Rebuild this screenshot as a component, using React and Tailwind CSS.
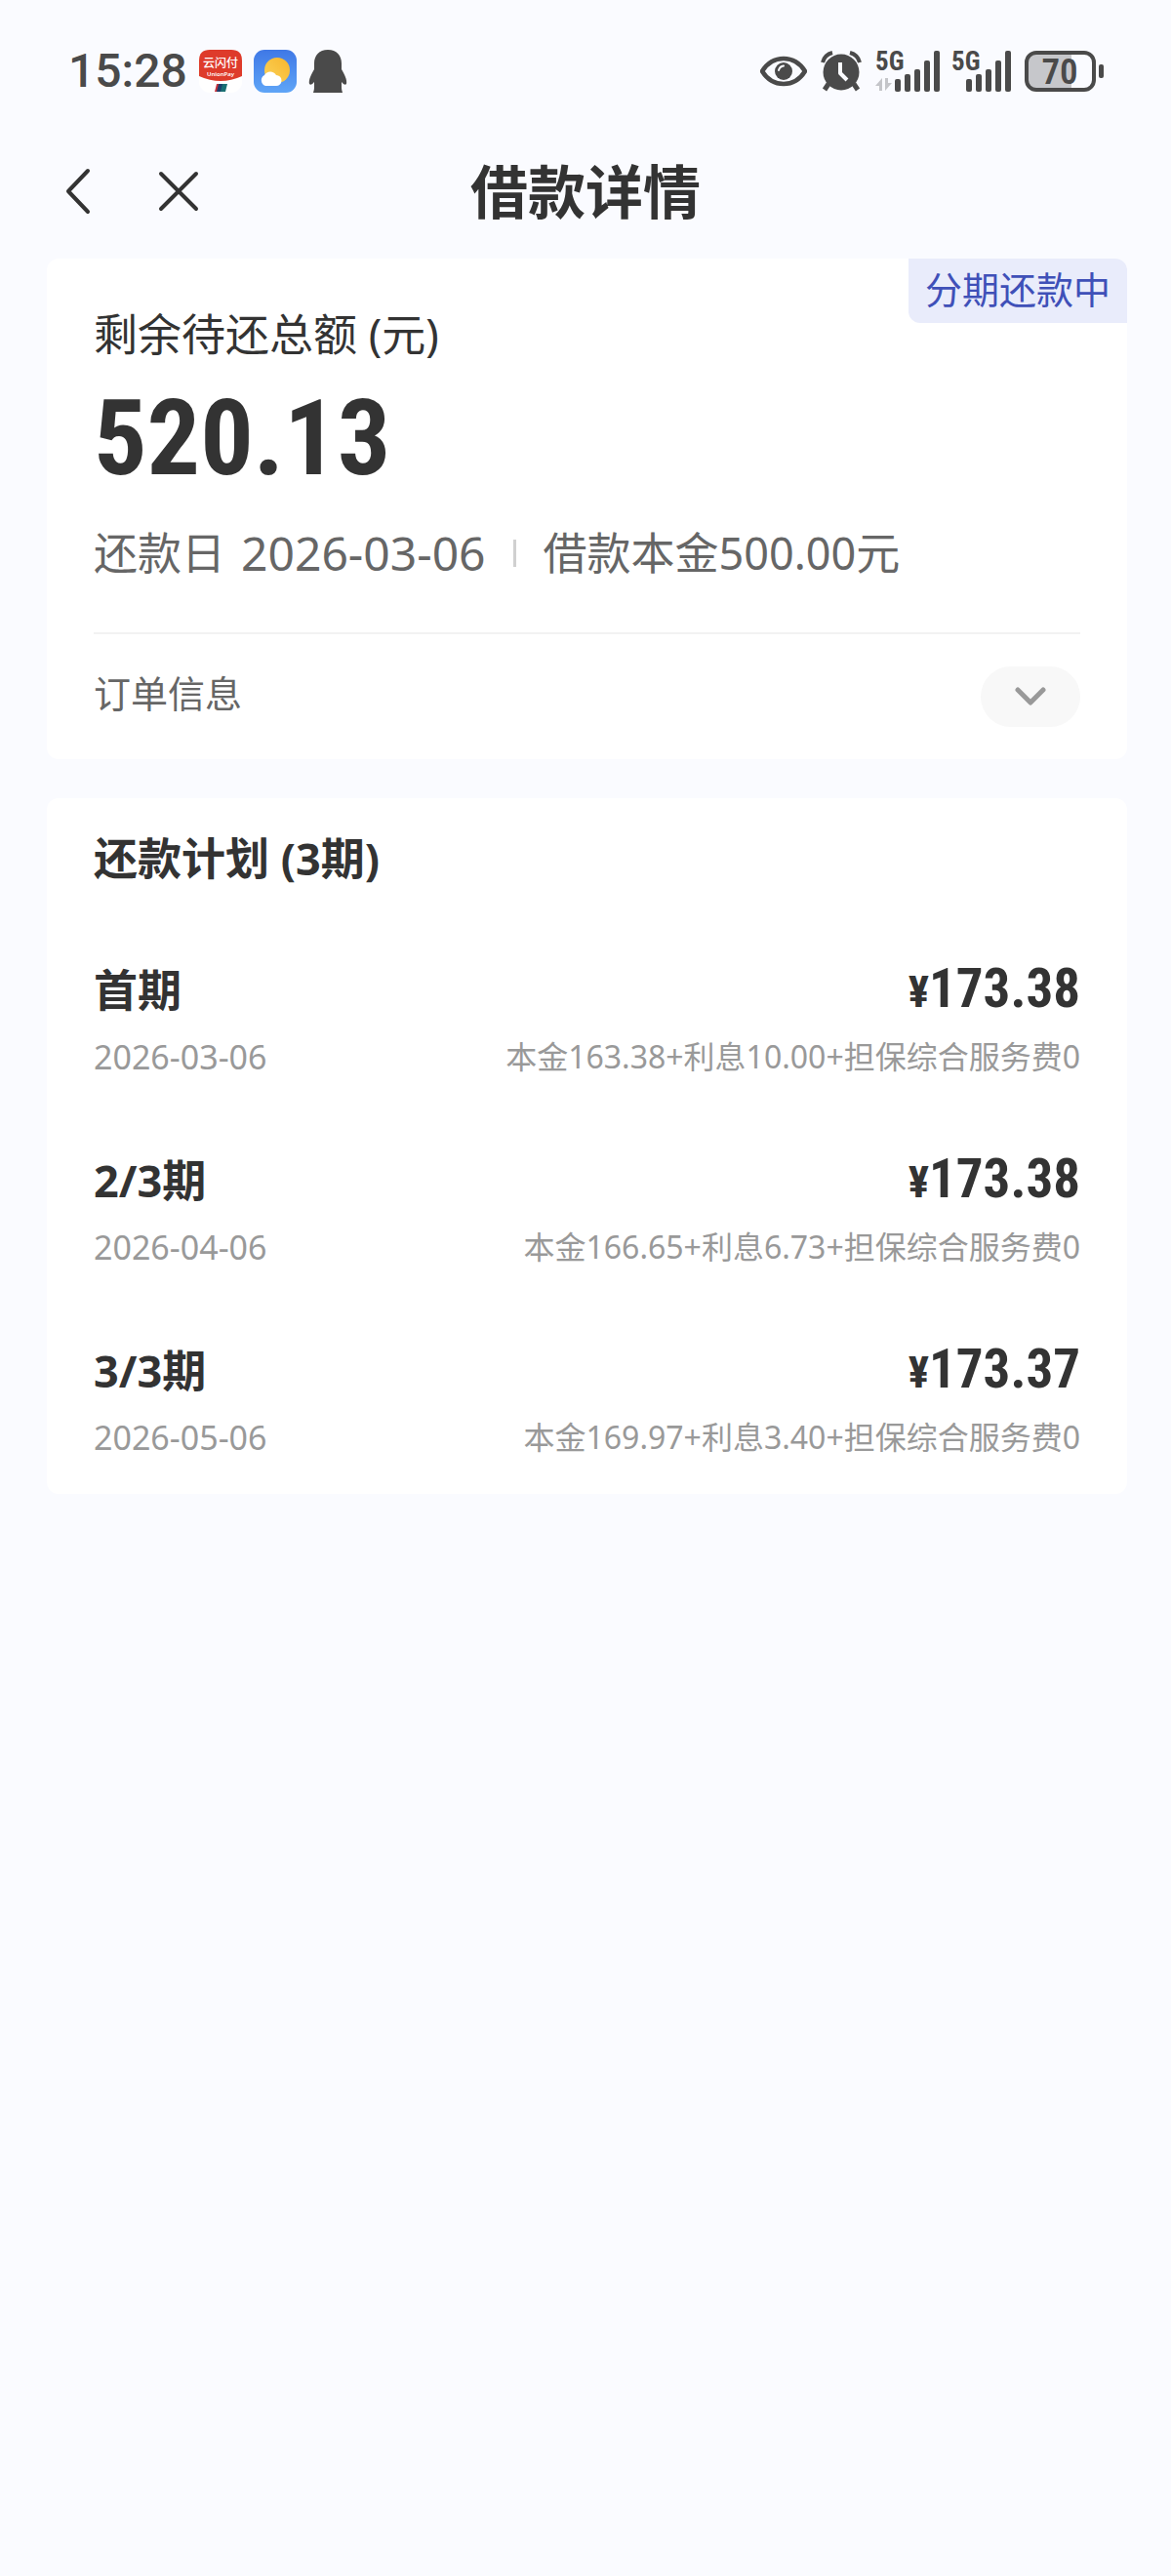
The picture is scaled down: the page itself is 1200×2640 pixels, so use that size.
import { useState } from "react";

const DARK = "#4a4a4a";

const plan = [
  { name: "首期", date: "2026-03-06", amount: "173.38", detail: "本金163.38+利息10.00+担保综合服务费0" },
  { name: "2/3期", date: "2026-04-06", amount: "173.38", detail: "本金166.65+利息6.73+担保综合服务费0" },
  { name: "3/3期", date: "2026-05-06", amount: "173.37", detail: "本金169.97+利息3.40+担保综合服务费0" },
];

function UnionPayIcon() {
  return (
    <svg width="44" height="44" viewBox="0 0 44 44" aria-label="云闪付">
      <rect width="44" height="44" rx="11" fill="#fff" />
      <path d="M0 11Q0 0 11 0H33Q44 0 44 11V27Q33 32 22 32Q11 32 0 27Z" fill="#de3b2b" />
      <text x="22" y="18" fontSize="12" fontWeight="500" fill="#fff" textAnchor="middle">云闪付</text>
      <text x="22" y="27" fontSize="6" fontWeight="600" fill="#fff" textAnchor="middle">UnionPay</text>
      <path d="M18 35H22L20 43H16Z" fill="#c8323c" />
      <path d="M20 35H25L23 43H18Z" fill="#1d3f6c" />
      <path d="M24 35H29L27 43H22Z" fill="#1a6f73" />
    </svg>
  );
}

function WeatherIcon() {
  return (
    <svg width="44" height="44" viewBox="0 0 44 44" aria-label="天气">
      <defs>
        <linearGradient id="sky" x1="0" y1="0" x2="0" y2="1">
          <stop offset="0" stopColor="#3f78e6" />
          <stop offset="1" stopColor="#5fa5f7" />
        </linearGradient>
        <linearGradient id="sun" x1="1" y1="0" x2="0" y2="1">
          <stop offset="0" stopColor="#f7b52c" />
          <stop offset="1" stopColor="#fbd35a" />
        </linearGradient>
      </defs>
      <rect width="44" height="44" rx="11" fill="url(#sky)" />
      <circle cx="24" cy="21" r="13" fill="url(#sun)" />
      <path d="M12 37a6 6 0 0 1-1-11a7 7 0 0 1 12 0a5.500 5.500 0 0 1 0 11z" fill="#fff" />
    </svg>
  );
}

function PenguinIcon() {
  return (
    <svg width="40" height="44" viewBox="0 0 40 44" fill={DARK} aria-label="QQ">
      <path d="M20 0C29 0 34 6 34 14V20C37 25 40 31 39 35Q37 37 34 33V39Q34 41 35 44H5Q6 41 6 39V33Q3 37 1 35C0 31 3 25 6 20V14C6 6 11 0 20 0Z" />
    </svg>
  );
}

function EyeIcon() {
  return (
    <svg width="48" height="32" viewBox="0 0 48 32" fill="none">
      <path d="M2 16C7 8 15 3 24 3S41 8 46 16C41 24 33 29 24 29S7 24 2 16Z" stroke={DARK} strokeWidth="4.500" strokeLinejoin="round" />
      <circle cx="24" cy="16" r="9" fill={DARK} />
      <path d="M19 15Q20 11 24 10.500" stroke="#fafbff" strokeWidth="2" strokeLinecap="round" />
    </svg>
  );
}

function AlarmIcon() {
  return (
    <svg width="42" height="42" viewBox="0 0 42 42" fill="none" stroke={DARK}>
      <circle cx="21" cy="22" r="18.500" fill={DARK} stroke="none" />
      <path d="M2 12Q4 4 12 2M40 12Q38 4 30 2" strokeWidth="4" />
      <path d="M8 34L4 40M34 34L38 40" strokeWidth="5" />
      <path d="M20 12V23L27 30" stroke="#fafbff" strokeWidth="4" strokeLinejoin="round" />
    </svg>
  );
}

function SignalIcon({ arrows }) {
  // the bars sit closer to the label when there are no data arrows
  const start = arrows ? 20 : 15;
  const tops = [29, 24, 19, 10, 0];

  return (
    <svg width={start + 46} height="58" viewBox={`0 -8 ${start + 46} 58`} fill={DARK} aria-label="5G">
      <text x="0" y="20" fontSize="27" fontWeight="700" className="font-['Roboto_Condensed',sans-serif]">5G</text>
      {arrows && <path d="M7 28V41H4V36H0ZM10 41V28H13V33H17Z" fill="#c4c5c9" />}
      {tops.map((top, i) => (
        <rect key={top} x={start + i * 10} y={top} width="6" height={42 - top} rx="2" />
      ))}
    </svg>
  );
}

function BatteryIcon() {
  return (
    <svg width="82" height="42" viewBox="0 0 82 42" aria-label="70%">
      <path d="M12 3H48V39H12Q3 39 3 30V12Q3 3 12 3Z" fill="#c6c7cb" />
      <rect x="2" y="2" width="69" height="38" rx="10" fill="none" stroke={DARK} strokeWidth="4" />
      <rect x="76" y="14" width="5" height="14" rx="2" fill={DARK} />
      <text x="36" y="34" fontSize="37" fontWeight="600" fill={DARK} textAnchor="middle" className="font-['Roboto_Condensed',sans-serif]">70</text>
    </svg>
  );
}

function StatusBar() {
  return (
    <div className="flex h-[146px] items-center justify-between pr-[68px] pl-[70px]">
      <div className="flex items-center gap-3">
        <span className="font-[Roboto,sans-serif] text-[48px] leading-none font-medium text-[#4a4a4a]">15:28</span>
        <UnionPayIcon />
        <WeatherIcon />
        <PenguinIcon />
      </div>
      <div className="flex items-center gap-[14px]">
        <EyeIcon />
        <AlarmIcon />
        <div className="flex gap-3">
          <SignalIcon arrows />
          <SignalIcon />
        </div>
        <BatteryIcon />
      </div>
    </div>
  );
}

function Header() {
  return (
    <header className="grid h-[100px] grid-cols-[1fr_auto_1fr] items-center">
      <div className="flex items-center gap-[68px] pl-[66px]">
        <button type="button" aria-label="返回">
          <svg width="28" height="48" viewBox="0 0 28 48" fill="none" stroke="#333" strokeWidth="4" strokeLinecap="round" strokeLinejoin="round">
            <path d="M24 3L4 24L24 45" />
          </svg>
        </button>
        <button type="button" aria-label="关闭">
          <svg width="42" height="42" viewBox="0 0 42 42" fill="none" stroke="#333" strokeWidth="4" strokeLinecap="round">
            <path d="M3 3L39 39M39 3L3 39" />
          </svg>
        </button>
      </div>
      <h1 className="text-[59px] leading-none font-bold">借款详情</h1>
    </header>
  );
}

function SummaryCard() {
  const [open, setOpen] = useState(false);

  return (
    <section className="relative rounded-xl bg-white px-12 pt-12">
      <span className="absolute top-0 right-0 rounded-tr-xl rounded-bl-xl bg-[#e9ecfb] px-[17px] pb-1 text-[38px] leading-[62px] text-[#3f50b8]">
        分期还款中
      </span>

      <p className="text-[45px] leading-[60px]">剩余待还总额 (元)</p>
      <p className="mt-7 font-['Roboto_Condensed',sans-serif] text-[108px] leading-[96px] font-bold">520.13</p>

      <div className="mt-10 flex items-center pb-[51px] text-[45px] leading-[60px] text-[#666]">
        <span>还款日</span>
        <span className="ml-4 text-[48px]">2026-03-06</span>
        <span className="mx-7 h-7 w-[3px] bg-[#d0d0d0]" />
        <span>借款本金500.00元</span>
      </div>

      <div className="flex h-[130px] items-center justify-between border-t-2 border-[#f2f2f2]">
        <span className="pb-2 text-[38px] leading-[60px] text-[#666]">订单信息</span>
        <button
          type="button"
          aria-label="展开订单信息"
          aria-expanded={open}
          onClick={() => setOpen(!open)}
          className="flex h-[62px] w-[102px] items-center justify-center rounded-full bg-[#f8f8f8]"
        >
          <svg width="32" height="20" viewBox="0 0 32 20" fill="none" stroke="#999" strokeWidth="5" strokeLinecap="round" strokeLinejoin="round">
            <path d="M3 3L16 16L29 3" />
          </svg>
        </button>
      </div>
    </section>
  );
}

function PlanCard() {
  return (
    <section className="mt-10 rounded-xl bg-white px-12 pt-8 pb-[38px]">
      <h2 className="text-[45px] leading-[60px] font-bold">还款计划 (3期)</h2>
      <ul className="mt-[75px] space-y-[77px]">
        {plan.map((item) => (
          <li key={item.date}>
            <div className="flex h-[60px] items-center justify-between leading-[60px] font-bold">
              <span className="text-[45px]">{item.name}</span>
              <span className="flex items-baseline font-['Roboto_Condensed',sans-serif]">
                <span className="text-[45px]">¥</span>
                <span className="text-[55px]">{item.amount}</span>
              </span>
            </div>
            <div className="mt-[18px] flex h-10 items-center justify-between leading-[40px] text-[#999]">
              <span className="text-[34px]">{item.date}</span>
              <span className="text-[32px]">{item.detail}</span>
            </div>
          </li>
        ))}
      </ul>
    </section>
  );
}

export default function App() {
  return (
    <div className="min-h-screen bg-[#fafbff] font-['Noto_Sans','Noto_Sans_CJK_SC',sans-serif] text-[#333]">
      <StatusBar />
      <Header />
      <main className="pt-[19px] pr-[45px] pl-12">
        <SummaryCard />
        <PlanCard />
      </main>
    </div>
  );
}
